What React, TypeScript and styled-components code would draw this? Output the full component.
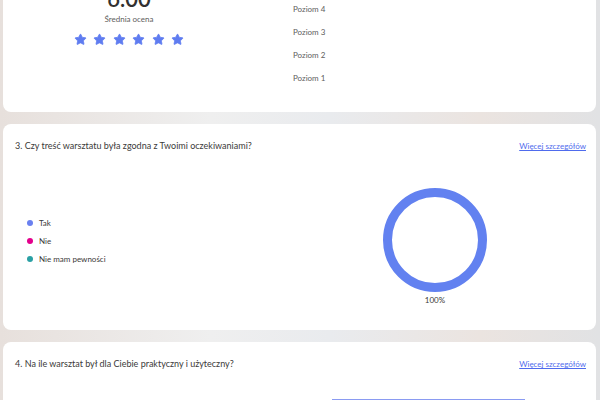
import React from 'react';
import styled, { createGlobalStyle } from 'styled-components';
import { Star } from 'lucide-react';

const GlobalStyle = createGlobalStyle`
  html, body {
    margin: 0;
    padding: 0;
    height: 100%;
    overflow: hidden;
    background: linear-gradient(90deg, #e7e0dc 0%, #efefef 35%, #e9ebee 55%, #ebe4e0 80%, #e1e2e4 100%);
    font-family: Lato, 'Noto Sans', sans-serif;
    color: #323130;
  }
`;

// page is scrolled, first card is cut at the top
const Page = styled.div`
  margin-top: -65px;
  padding: 0 4px 0 3px;
  display: flex;
  flex-direction: column;
  gap: 12px;
`;

const Card = styled.section`
  background: #ffffff;
  border-radius: 8px;
  padding: 16px 10px 23px 12px;
`;

const Header = styled.div`
  display: flex;
  justify-content: space-between;
  align-items: center;
  line-height: 12px;
`;

const Question = styled.h3`
  margin: 0;
  font-size: 9px;
  font-weight: 400;
  color: #3b3a39;
`;

const MoreLink = styled.a`
  font-size: 8px;
  color: #4f6bed;
  text-decoration: underline;
  cursor: pointer;
`;

const RatingBody = styled.div<{ $offset: number }>`
  display: grid;
  grid-template-columns: 228px 1fr;
  column-gap: 50px;
  margin-top: ${({ $offset }) => $offset}px;
`;

const Summary = styled.div`
  display: flex;
  flex-direction: column;
  align-items: center;
  padding-top: 35px;
`;

const Average = styled.div`
  font-size: 22px;
  line-height: 26px;
  font-weight: 600;
  color: #323130;
`;

const AverageLabel = styled.div`
  margin-top: 2px;
  font-size: 8px;
  line-height: 10px;
  color: #605e5c;
`;

const Stars = styled.div`
  display: flex;
  gap: 6.5px;
  margin-top: 9px;
`;

const Levels = styled.div`
  display: flex;
  flex-direction: column;
`;

const LevelRow = styled.div`
  display: grid;
  grid-template-columns: 39px 193px;
  align-items: center;
  height: 23px;
`;

const LevelLabel = styled.span`
  font-size: 8px;
  color: #605e5c;
`;

const Bar = styled.div`
  height: 10px;
  background: #8a9bf2;
`;

const ChoiceBody = styled.div`
  display: grid;
  grid-template-columns: 280px 1fr;
  padding-top: 36px;
  margin-bottom: 2px;
`;

const Legend = styled.ul`
  list-style: none;
  margin: 26px 0 0;
  padding: 0 0 0 12px;
  align-self: start;
`;

const LegendItem = styled.li`
  display: flex;
  align-items: center;
  gap: 6px;
  height: 18px;
  font-size: 8px;
  color: #3b3a39;
`;

const Dot = styled.span<{ $color: string }>`
  width: 6px;
  height: 6px;
  border-radius: 50%;
  background: ${({ $color }) => $color};
`;

const ChartCol = styled.div`
  display: flex;
  flex-direction: column;
  align-items: center;
  gap: 3px;
  padding-right: 11px;
`;

const Percent = styled.span`
  font-size: 8px;
  line-height: 10px;
  color: #3b3a39;
`;

const levels = [6, 5, 4, 3, 2, 1];

const RatingCard: React.FC<{
  question?: string;
  average: string;
  counts: { [key: number]: number };
  offset: number;
}> = ({ question, average, counts, offset }) => {
  const total = Object.values(counts).reduce((a, b) => a + b, 0) || 1;
  return (
    <Card>
      {question && (
        <Header>
          <Question>{question}</Question>
          <MoreLink>Więcej szczegółów</MoreLink>
        </Header>
      )}
      <RatingBody $offset={offset}>
        <Summary>
          <Average>{average}</Average>
          <AverageLabel>Średnia ocena</AverageLabel>
          <Stars>
            {Array.from({ length: 6 }).map((_, i) => (
              <Star key={i} size={13} color="#5f7cf0" fill="#5f7cf0" strokeWidth={1.5} />
            ))}
          </Stars>
        </Summary>
        <Levels>
          {levels.map((lvl) => (
            <LevelRow key={lvl}>
              <LevelLabel>Poziom {lvl}</LevelLabel>
              <Bar style={{ width: `${((counts[lvl] || 0) / total) * 100}%` }} />
            </LevelRow>
          ))}
        </Levels>
      </RatingBody>
    </Card>
  );
};

const options = [
  { label: 'Tak', color: '#6a80f0' },
  { label: 'Nie', color: '#e3008c' },
  { label: 'Nie mam pewności', color: '#2aa0a4' },
];

const App: React.FC = () => (
  <>
    <GlobalStyle />
    <Page>
      <RatingCard average="6.00" counts={{ 6: 1 }} offset={0} />
      <Card>
        <Header>
          <Question>3. Czy treść warsztatu była zgodna z Twoimi oczekiwaniami?</Question>
          <MoreLink>Więcej szczegółów</MoreLink>
        </Header>
        <ChoiceBody>
          <Legend>
            {options.map((o) => (
              <LegendItem key={o.label}>
                <Dot $color={o.color} />
                {o.label}
              </LegendItem>
            ))}
          </Legend>
          <ChartCol>
            <svg width="104" height="104" viewBox="0 0 104 104">
              <circle cx="52" cy="52" r="47.5" fill="none" stroke="#6281f0" strokeWidth="9" />
            </svg>
            <Percent>100%</Percent>
          </ChartCol>
        </ChoiceBody>
      </Card>
      <RatingCard
        question="4. Na ile warsztat był dla Ciebie praktyczny i użyteczny?"
        average="6.00"
        counts={{ 6: 1 }}
        offset={22}
      />
    </Page>
  </>
);

export default App;
